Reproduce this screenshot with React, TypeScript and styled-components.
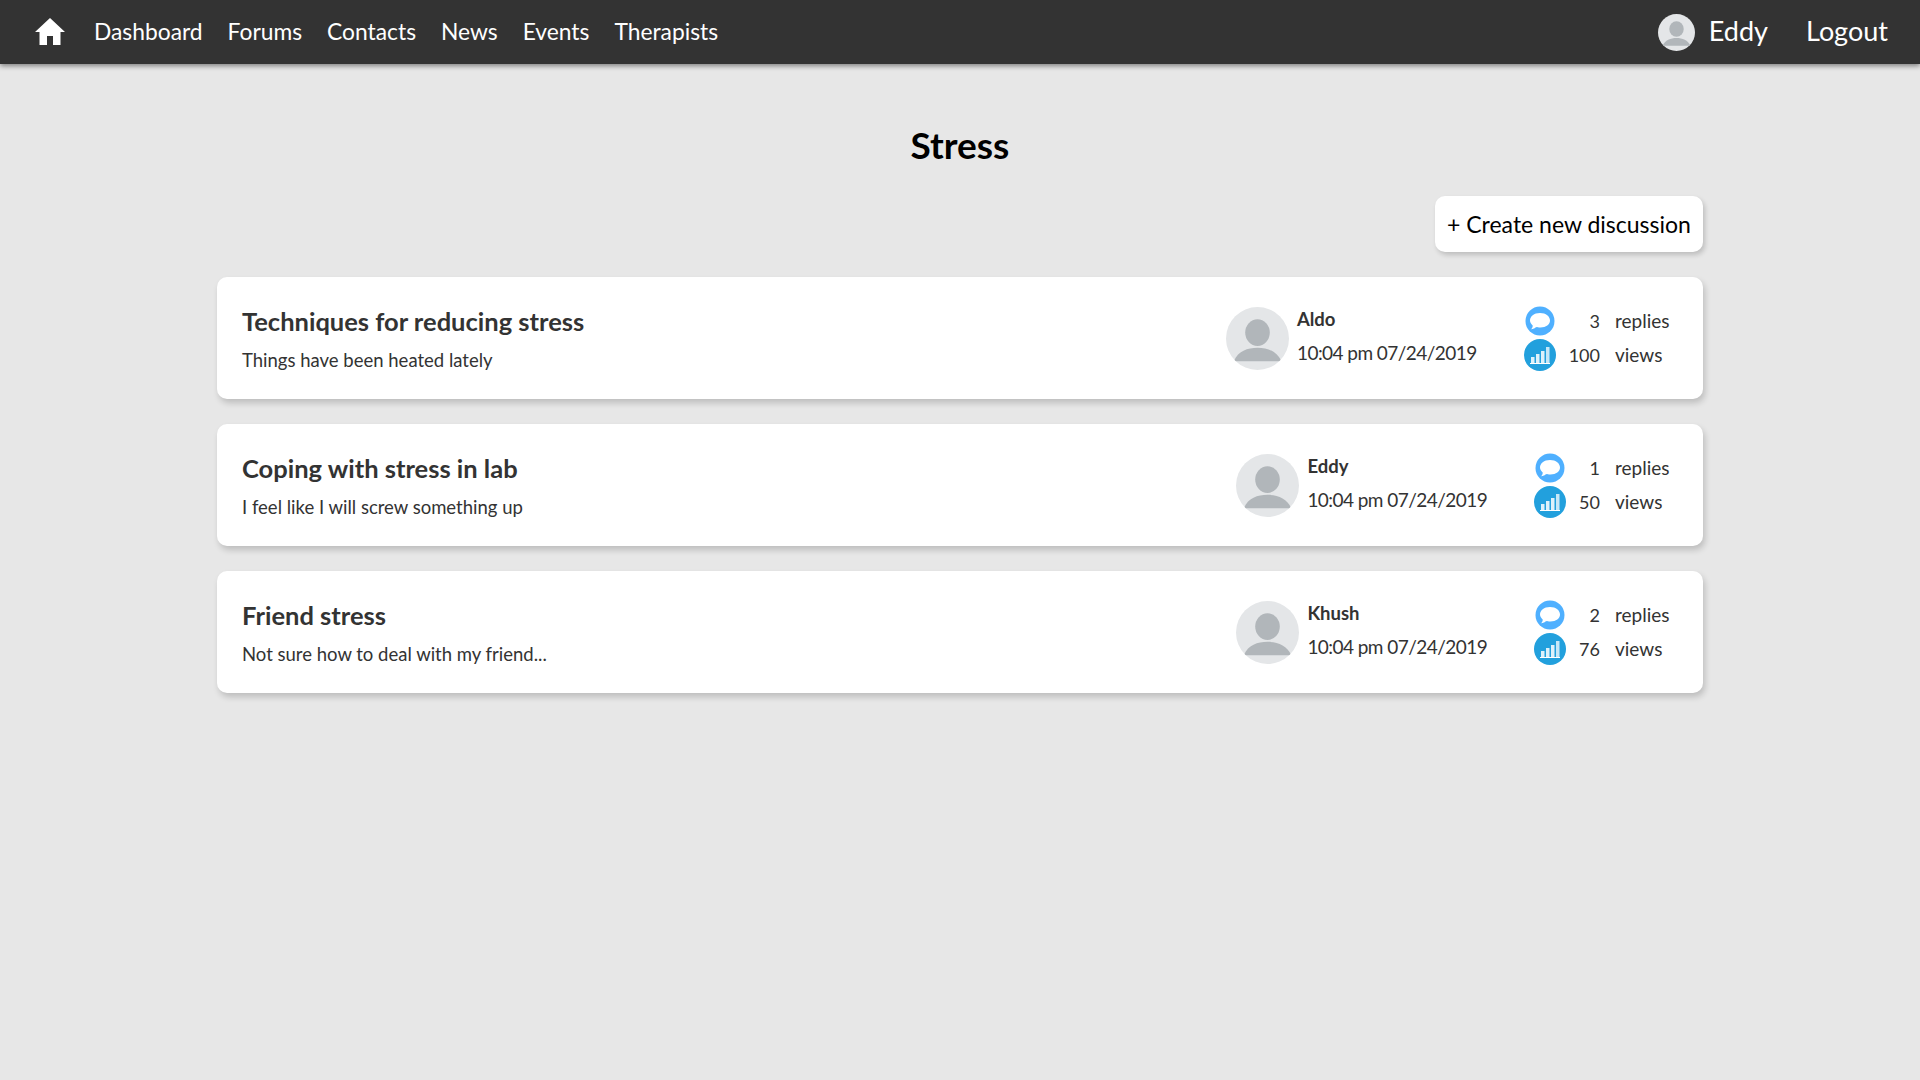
import React from 'react';
import styled, { createGlobalStyle } from 'styled-components';

const GlobalStyle = createGlobalStyle`
  html, body {
    margin: 0;
    padding: 0;
    height: 100%;
    background: #e7e7e7;
    font-family: Lato, "Open Sans", sans-serif;
  }
`;

const Page = styled.div`
  min-height: 1080px;
  background: #e7e7e7;
`;

const NavBar = styled.nav`
  height: 64px;
  box-sizing: border-box;
  padding: 0 32px 0 35px;
  display: flex;
  align-items: center;
  background: #333;
  box-shadow: 0 2px 5px rgba(0, 0, 0, 0.45);
`;

const HomeLink = styled.a`
  display: flex;
  margin-right: 29px;
`;

const NavLinks = styled.div`
  display: flex;
  gap: 25px;
  padding-bottom: 3px;
`;

const NavLink = styled.a`
  color: #fff;
  font-size: 22.8px;
`;

const NavRight = styled.div`
  margin-left: auto;
  display: flex;
  align-items: center;
`;

const UserName = styled.span`
  margin-left: 14px;
  margin-right: 38px;
  padding-bottom: 3px;
  color: #fff;
  font-size: 27px;
`;

const Logout = styled.a`
  padding-bottom: 3px;
  color: #fff;
  font-size: 27px;
`;

const Content = styled.main`
  width: 1486px;
  margin: 0 auto;
  display: flex;
  flex-direction: column;
`;

const Title = styled.h1`
  margin: 59px 0 1px;
  height: 44px;
  line-height: 44px;
  text-align: center;
  color: #000;
  font-size: 37px;
  font-weight: 700;
`;

const CreateButton = styled.button`
  align-self: flex-end;
  height: 56px;
  width: 268px;
  margin-top: 28px;
  padding: 0;
  border: 0;
  border-radius: 10px;
  background: #fff;
  color: #000;
  font-family: inherit;
  font-size: 23px;
  box-shadow: 2px 3px 5px rgba(0, 0, 0, 0.18);
`;

const List = styled.div`
  margin-top: 25px;
  display: flex;
  flex-direction: column;
  gap: 25px;
`;

const Card = styled.article`
  height: 122px;
  box-sizing: border-box;
  padding: 0 34px 0 25px;
  display: flex;
  align-items: center;
  border-radius: 10px;
  background: #fff;
  box-shadow: 2px 4px 6px rgba(0, 0, 0, 0.18);
`;

const Summary = styled.div`
  flex: 1;
  color: #333;
`;

const ThreadTitle = styled.h2`
  margin: 0 0 11px;
  font-size: 25.5px;
  line-height: 32px;
  font-weight: 700;
`;

const ThreadText = styled.p`
  margin: 0;
  font-size: 18.5px;
  line-height: 24px;
`;

const Author = styled.div`
  display: flex;
  align-items: center;
  gap: 8px;
  color: #333;
`;

const AuthorMeta = styled.div`
  display: flex;
  flex-direction: column;
  gap: 10px;
  padding-bottom: 4px;
`;

const AuthorName = styled.strong`
  font-size: 18.5px;
  line-height: 24px;
`;

const Timestamp = styled.span`
  font-size: 19px;
  line-height: 24px;
  letter-spacing: -0.55px;
`;

const Stats = styled.div`
  margin-left: 47px;
  display: grid;
  grid-template-columns: 32px auto auto;
  row-gap: 3px;
  align-items: center;
  color: #333;
  font-size: 19px;
`;

const StatIcon = styled.span`
  display: flex;
  justify-content: center;
`;

const StatValue = styled.span`
  padding-left: 13px;
  text-align: right;
  font-size: 18px;
`;

const StatLabel = styled.span`
  width: 54px;
  margin-left: 15px;
  white-space: nowrap;
`;

const HomeIcon = () => (
  <svg width="30" height="28" viewBox="0 0 30 28">
    <path fill="#fff" d="M15 0 L30 14 L25.5 14 L25.5 27 L18 27 L18 18 L12 18 L12 27 L4.5 27 L4.5 14 L0 14 Z" />
  </svg>
);

const Avatar = ({ size }: { size: number }) => (
  <svg width={size} height={size} viewBox="0 0 64 64">
    <defs>
      <clipPath id={`avatar-${size}`}>
        <circle cx="32" cy="32" r="32" />
      </clipPath>
    </defs>
    <circle cx="32" cy="32" r="32" fill="#e4e6e8" />
    <g clipPath={`url(#avatar-${size})`} fill="#b1b6ba">
      <ellipse cx="32" cy="26" rx="12.5" ry="13.5" />
      <path d="M8 55 C12 45 22 41.500 32 41.500 C42 41.500 52 45 56 55 Z" />
    </g>
  </svg>
);

const CommentIcon = () => (
  <svg width="30" height="30" viewBox="0 0 30 30">
    <circle cx="15" cy="15" r="14.500" fill="#4fb0ff" />
    <path
      fill="#fff"
      d="M15 7 C21 7 25 10.500 25 14.500 C25 18.500 21 21.500 15.500 21.500 C13.500 21.500 12 21.300 11 21 C10 22.300 8 23.200 6 23.300 C7.200 22.200 7.800 20.800 7.700 19.500 C6 18 5 16.300 5 14.500 C5 10.500 9 7 15 7 Z"
    />
  </svg>
);

const ChartIcon = () => (
  <svg width="32" height="32" viewBox="0 0 32 32">
    <circle cx="16" cy="16" r="16" fill="#22a0dd" />
    <g fill="#fff">
      <rect x="7" y="18" width="3.500" height="6" opacity="0.85" />
      <rect x="12" y="15" width="3.500" height="9" opacity="0.85" />
      <rect x="17" y="12" width="3.500" height="12" opacity="0.85" />
      <rect x="22" y="8" width="3.500" height="16" opacity="0.75" />
      <rect x="6" y="24" width="20" height="1" />
    </g>
  </svg>
);

interface IThread {
  title: string;
  text: string;
  author: string;
  replies: number;
  views: number;
}

const threads: IThread[] = [
  { title: 'Techniques for reducing stress', text: 'Things have been heated lately', author: 'Aldo', replies: 3, views: 100 },
  { title: 'Coping with stress in lab', text: 'I feel like I will screw something up', author: 'Eddy', replies: 1, views: 50 },
  { title: 'Friend stress', text: 'Not sure how to deal with my friend...', author: 'Khush', replies: 2, views: 76 },
];

export default function App(): React.ReactElement {
  return (
    <Page>
      <GlobalStyle />
      <NavBar>
        <HomeLink><HomeIcon /></HomeLink>
        <NavLinks>
          {['Dashboard', 'Forums', 'Contacts', 'News', 'Events', 'Therapists'].map((item) => (
            <NavLink key={item}>{item}</NavLink>
          ))}
        </NavLinks>
        <NavRight>
          <Avatar size={37} />
          <UserName>Eddy</UserName>
          <Logout>Logout</Logout>
        </NavRight>
      </NavBar>
      <Content>
        <Title>Stress</Title>
        <CreateButton>+ Create new discussion</CreateButton>
        <List>
          {threads.map((thread) => (
            <Card key={thread.title}>
              <Summary>
                <ThreadTitle>{thread.title}</ThreadTitle>
                <ThreadText>{thread.text}</ThreadText>
              </Summary>
              <Author>
                <Avatar size={63} />
                <AuthorMeta>
                  <AuthorName>{thread.author}</AuthorName>
                  <Timestamp>10:04 pm 07/24/2019</Timestamp>
                </AuthorMeta>
              </Author>
              <Stats>
                <StatIcon><CommentIcon /></StatIcon>
                <StatValue>{thread.replies}</StatValue>
                <StatLabel>replies</StatLabel>
                <StatIcon><ChartIcon /></StatIcon>
                <StatValue>{thread.views}</StatValue>
                <StatLabel>views</StatLabel>
              </Stats>
            </Card>
          ))}
        </List>
      </Content>
    </Page>
  );
}
